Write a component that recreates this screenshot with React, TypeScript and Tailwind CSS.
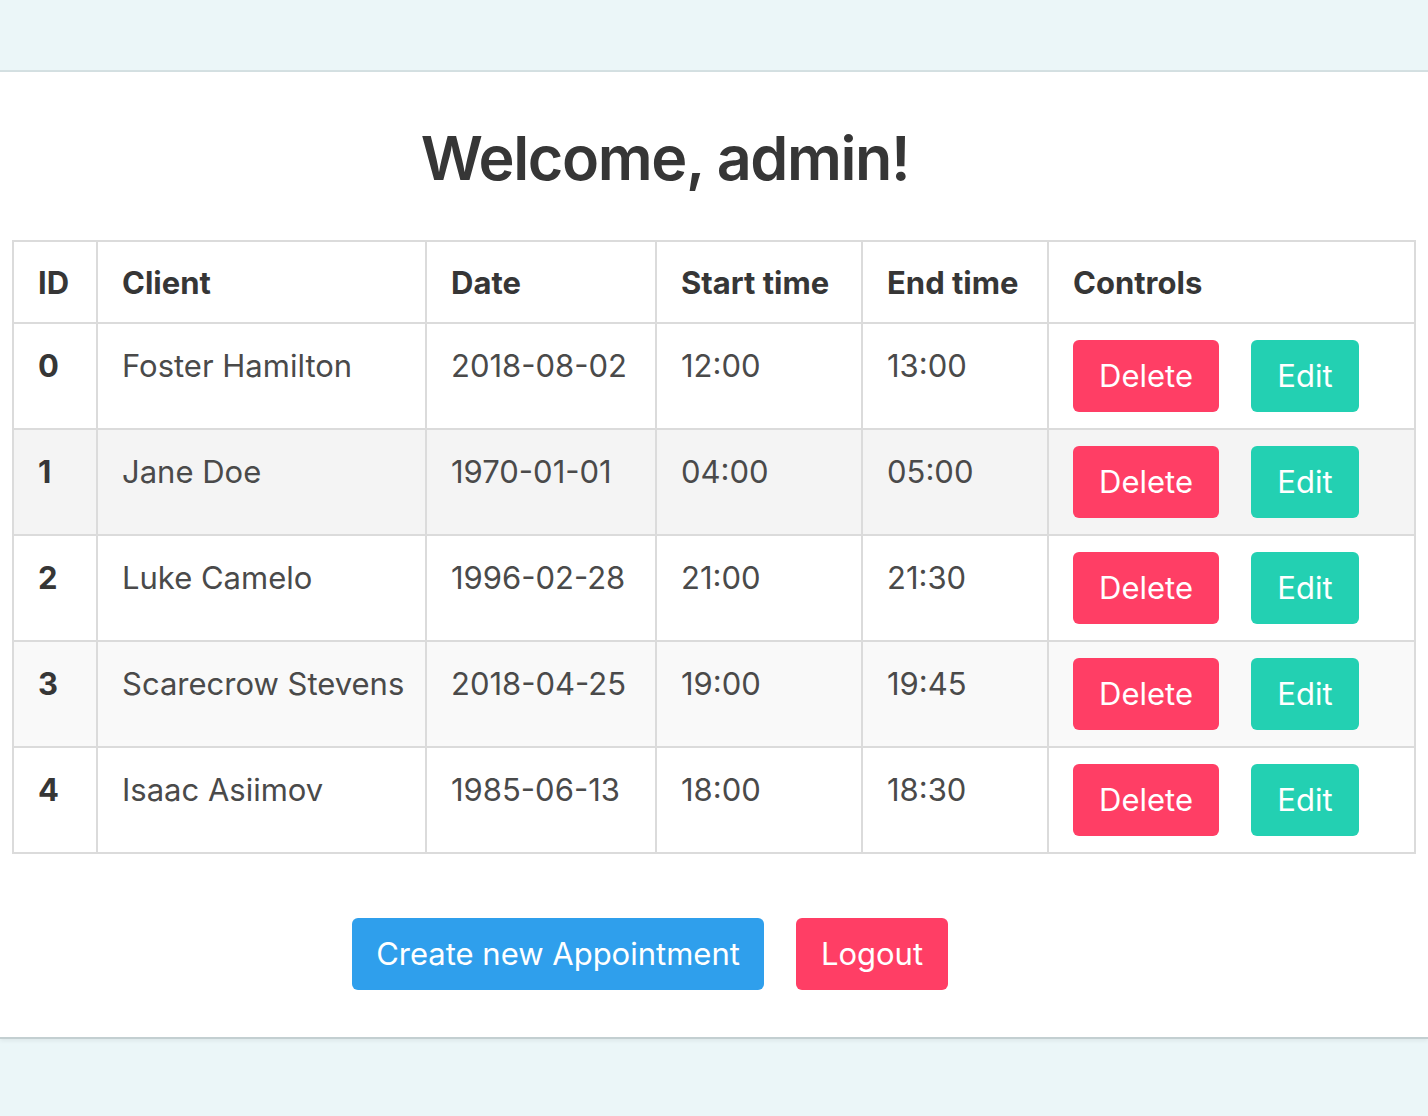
const appointments = [
  { id: 0, client: 'Foster Hamilton', date: '2018-08-02', start: '12:00', end: '13:00' },
  { id: 1, client: 'Jane Doe', date: '1970-01-01', start: '04:00', end: '05:00' },
  { id: 2, client: 'Luke Camelo', date: '1996-02-28', start: '21:00', end: '21:30' },
  { id: 3, client: 'Scarecrow Stevens', date: '2018-04-25', start: '19:00', end: '19:45' },
  { id: 4, client: 'Isaac Asiimov', date: '1985-06-13', start: '18:00', end: '18:30' },
];

const rowBg = ['bg-white', 'bg-[#f4f4f4]', 'bg-white', 'bg-[#f9f9f9]', 'bg-white'];

export default function App() {
  return (
    <div
      className="min-h-[1116px] bg-[#ebf6f8] text-[#363636]"
      style={{ fontFamily: 'Inter, "Noto Sans", sans-serif' }}
    >
      <div className="h-[72px] border-b-2 border-[#d4e0e2] bg-[#ebf6f8]" />

      <section className="bg-white pt-[46px] pb-[47px] border-b-2 border-[#c3cfd1] shadow-[0_2px_4px_rgba(0,0,0,0.06)]">
        <h1 className="pr-[98px] text-center text-[61px] font-semibold leading-[80px] tracking-[-1.4px]">
          Welcome, admin!
        </h1>

        <table className="mx-3 mt-[42px] w-[1404px] table-fixed border-collapse border-2 border-[#dbdbdb] text-[31px] leading-[48px]">
          <colgroup>
            <col className="w-[84px]" />
            <col className="w-[329px]" />
            <col className="w-[230px]" />
            <col className="w-[206px]" />
            <col className="w-[186px]" />
            <col />
          </colgroup>
          <thead>
            <tr>
              {['ID', 'Client', 'Date', 'Start time', 'End time', 'Controls'].map((h) => (
                <th
                  key={h}
                  className="border-2 border-[#dbdbdb] px-6 pt-[17px] pb-[15px] text-left align-top font-bold text-[#363636]"
                >
                  {h}
                </th>
              ))}
            </tr>
          </thead>
          <tbody>
            {appointments.map((a, i) => (
              <tr key={a.id} className={rowBg[i]}>
                <td className="border-2 border-[#dbdbdb] px-6 pt-[18px] pb-4 align-top font-bold">{a.id}</td>
                <td className="border-2 border-[#dbdbdb] px-6 pt-[18px] pb-4 align-top whitespace-nowrap text-[#4a4a4a]">
                  {a.client}
                </td>
                <td className="border-2 border-[#dbdbdb] px-6 pt-[18px] pb-4 align-top text-[#4a4a4a]">{a.date}</td>
                <td className="border-2 border-[#dbdbdb] px-6 pt-[18px] pb-4 align-top text-[#4a4a4a]">{a.start}</td>
                <td className="border-2 border-[#dbdbdb] px-6 pt-[18px] pb-4 align-top text-[#4a4a4a]">{a.end}</td>
                <td className="border-2 border-[#dbdbdb] px-6 py-4 align-top">
                  <div className="flex gap-8">
                    <button className="h-[72px] w-[146px] rounded-md bg-[#ff3e65] text-white">Delete</button>
                    <button className="h-[72px] w-[108px] rounded-md bg-[#23d0b2] text-white">Edit</button>
                  </div>
                </td>
              </tr>
            ))}
          </tbody>
        </table>

        <div className="mt-[64px] flex justify-center gap-8 pr-[128px] text-[31px]">
          <button className="h-[72px] w-[412px] rounded-md bg-[#2f9fec] text-white">Create new Appointment</button>
          <button className="h-[72px] w-[152px] rounded-md bg-[#ff3e65] text-white">Logout</button>
        </div>
      </section>
    </div>
  );
}
